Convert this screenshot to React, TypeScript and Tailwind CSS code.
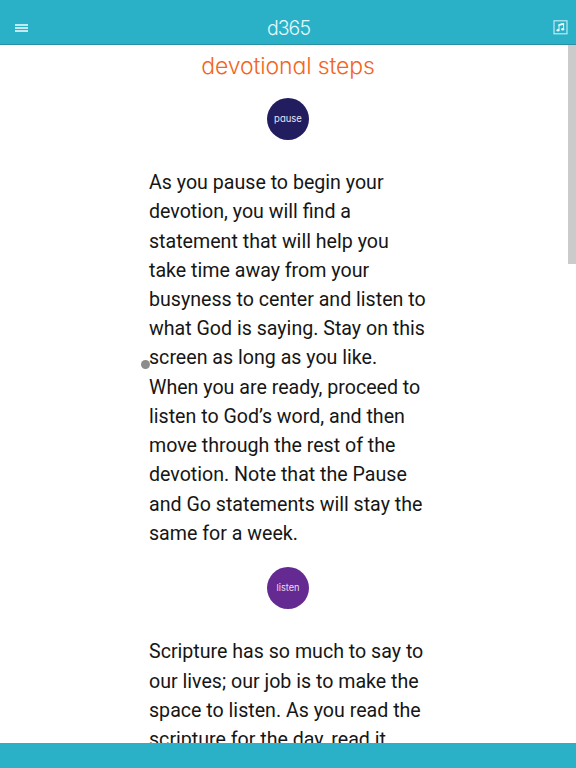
import React from 'react'

const pauseLines = [
  'As you pause to begin your',
  'devotion, you will find a',
  'statement that will help you',
  'take time away from your',
  'busyness to center and listen to',
  'what God is saying. Stay on this',
  'screen as long as you like.',
  'When you are ready, proceed to',
  'listen to God’s word, and then',
  'move through the rest of the',
  'devotion. Note that the Pause',
  'and Go statements will stay the',
  'same for a week.',
]

const listenLines = [
  'Scripture has so much to say to',
  'our lives; our job is to make the',
  'space to listen. As you read the',
  'scripture for the day, read it',
]

const Paragraph = ({ lines }: { lines: string[] }) => (
  <p className="font-['Roboto',sans-serif] text-[19.63px] leading-[29.22px] text-[#161616]">
    {lines.map((line) => (
      <span key={line} className="block whitespace-nowrap">{line}</span>
    ))}
  </p>
)

const App = () => {
  return (
    <div className="flex h-screen w-full flex-col overflow-hidden bg-white font-['Inter',sans-serif] [font-feature-settings:'cv11']">
      {/* Top bar */}
      <header className="flex h-[45px] shrink-0 items-center justify-between border-b border-[#2a8fa3] bg-[#2bb1c7] pt-[11px] pr-[8px] pl-[15px]">
        <button aria-label="Menu" className="flex w-[22px] flex-col gap-px">
          <span className="h-[2px] w-[13px] bg-[#bfebf1]"></span>
          <span className="h-[2px] w-[13px] bg-[#bfebf1]"></span>
          <span className="h-[2px] w-[13px] bg-[#bfebf1]"></span>
        </button>
        <h1 className="mr-[13px] flex-1 text-center text-[19.5px] leading-6 font-light tracking-[-0.05em] text-[#e2f8fb]">d365</h1>
        <button aria-label="Music">
          <svg width="15" height="15" viewBox="0 0 15 15" fill="none">
            <rect x="1" y="0.8" width="13" height="13" stroke="#c8eff4" strokeWidth="1.1" />
            <path d="M6 10V4.6l4.6-1.1V9" stroke="#e8fafc" strokeWidth="1" />
            <path d="M5.5 4.2l5.6-1.3v1.9L5.5 6.1z" fill="#e8fafc" />
            <ellipse cx="5" cy="10.3" rx="1.5" ry="1.3" fill="#e8fafc" />
            <ellipse cx="9.7" cy="9.2" rx="1.5" ry="1.3" fill="#e8fafc" />
          </svg>
        </button>
      </header>

      {/* Scrolling page */}
      <main className="relative flex min-h-0 flex-1 flex-col items-center overflow-hidden">
        <h2 className="mt-[6px] text-[23px] leading-[30px] font-light tracking-[-0.005em] whitespace-nowrap text-[#f26522]">devotional steps</h2>
        <div className="mt-[17px] flex size-[42px] shrink-0 items-center justify-center rounded-full bg-[#221d5e] pt-px text-[9.5px] text-[#e6e4f2]">pause</div>
        <div className="mt-[28.1px] w-[278px]">
          <Paragraph lines={pauseLines} />
        </div>
        <div className="mt-[19.1px] flex size-[42px] shrink-0 items-center justify-center rounded-full bg-[#652a91] text-[9.25px] text-[#e9def2]">listen</div>
        <div className="mt-[28.4px] w-[278px]">
          <Paragraph lines={listenLines} />
        </div>

        {/* Scrollbar */}
        <div className="absolute top-0 right-0 h-[219px] w-[8px] bg-[#cbcbcb]"></div>
        {/* Touch point */}
        <div className="absolute top-[315px] left-[141px] size-[9px] rounded-full bg-[#8c8c8c]"></div>
      </main>

      {/* Bottom bar */}
      <footer className="h-[25px] shrink-0 bg-[#2bb1c7]"></footer>
    </div>
  )
}

export default App
